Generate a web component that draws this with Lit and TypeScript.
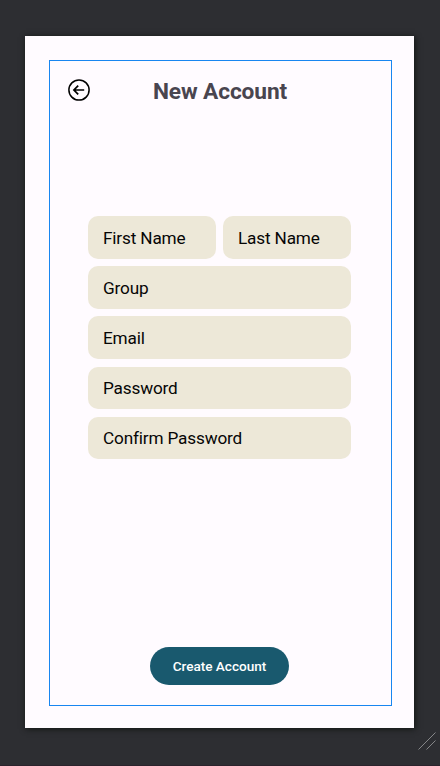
import { LitElement, html, css } from "lit";
import { customElement, property } from "lit/decorators.js";

@customElement("form-field")
class FormField extends LitElement {
  @property() label = "";
  static styles = css`
    :host {
      box-sizing: border-box;
      display: flex;
      align-items: center;
      flex: 1;
      height: 42.5px;
      padding: 0.5px 15px 0;
      border-radius: 10px;
      background: #ede8d8;
      color: #060606;
      font: 400 17.2px/20px Roboto, sans-serif;
      letter-spacing: -0.16px;
      white-space: nowrap;
    }
  `;
  render() {
    return html`<span>${this.label}</span>`;
  }
}

@customElement("app-root")
class AppRoot extends LitElement {
  static styles = css`
    :host {
      position: relative;
      box-sizing: border-box;
      display: block;
      width: 440px;
      height: 766px;
      padding: 36px 26px 38px 25px;
      background: #2d2e32;
      border-bottom: 1px solid #2b232c;
      overflow: hidden;
      font-family: Roboto, sans-serif;
    }
    .page {
      box-sizing: border-box;
      width: 389px;
      height: 692px;
      padding: 24px 22px 22px 24px;
      background: #fffbff;
      box-shadow: 1px 1px 6px #111412;
    }
    .screen {
      box-sizing: border-box;
      display: flex;
      flex-direction: column;
      height: 646px;
      border: 1px solid #1886f0;
    }
    .header {
      display: grid;
      grid-template-columns: 22px 1fr 22px;
      align-items: start;
      height: 22px;
      margin: 18px 19px 0 18px;
    }
    .back {
      display: block;
      width: 22px;
      height: 22px;
    }
    h1 {
      margin: 0;
      text-align: center;
      color: #49454f;
      font-size: 22.7px;
      font-weight: 700;
      line-height: 26px;
      letter-spacing: -0.1px;
      white-space: nowrap;
    }
    .form {
      display: flex;
      flex-direction: column;
      gap: 7.7px;
      margin: 115px 40px 0 38px;
    }
    .names {
      display: flex;
      gap: 7px;
    }
    .form > form-field {
      flex: none;
    }
    button {
      width: 139px;
      height: 38px;
      margin: auto auto 20px 100px;
      padding: 0;
      border: 0;
      border-radius: 19px;
      background: #19596e;
      color: #fff;
      font: 500 13.6px/16px Roboto, sans-serif;
      letter-spacing: -0.03px;
      white-space: nowrap;
    }
    .grip {
      position: absolute;
      right: 4px;
      bottom: 15px;
      width: 18px;
      height: 18px;
    }
  `;
  render() {
    return html`
      <div class="page">
        <div class="screen">
          <div class="header">
            <svg class="back" viewBox="0 0 22 22" fill="none" stroke="#000">
              <circle cx="11" cy="11" r="10.1" stroke-width="1.5" />
              <path d="M16.2 11H6.2M10.2 6.7L5.9 11l4.3 4.3" stroke-width="1.7" />
            </svg>
            <h1>New Account</h1>
          </div>
          <div class="form">
            <div class="names">
              <form-field label="First Name"></form-field>
              <form-field label="Last Name"></form-field>
            </div>
            <form-field label="Group"></form-field>
            <form-field label="Email"></form-field>
            <form-field label="Password"></form-field>
            <form-field label="Confirm Password"></form-field>
          </div>
          <button>Create Account</button>
        </div>
      </div>
      <svg class="grip" viewBox="0 0 18 18" stroke="#858688" stroke-width="1">
        <path d="M0.5 17.5L17.5 0.5M8.5 17.5L17.5 8.5" />
      </svg>
    `;
  }
}
